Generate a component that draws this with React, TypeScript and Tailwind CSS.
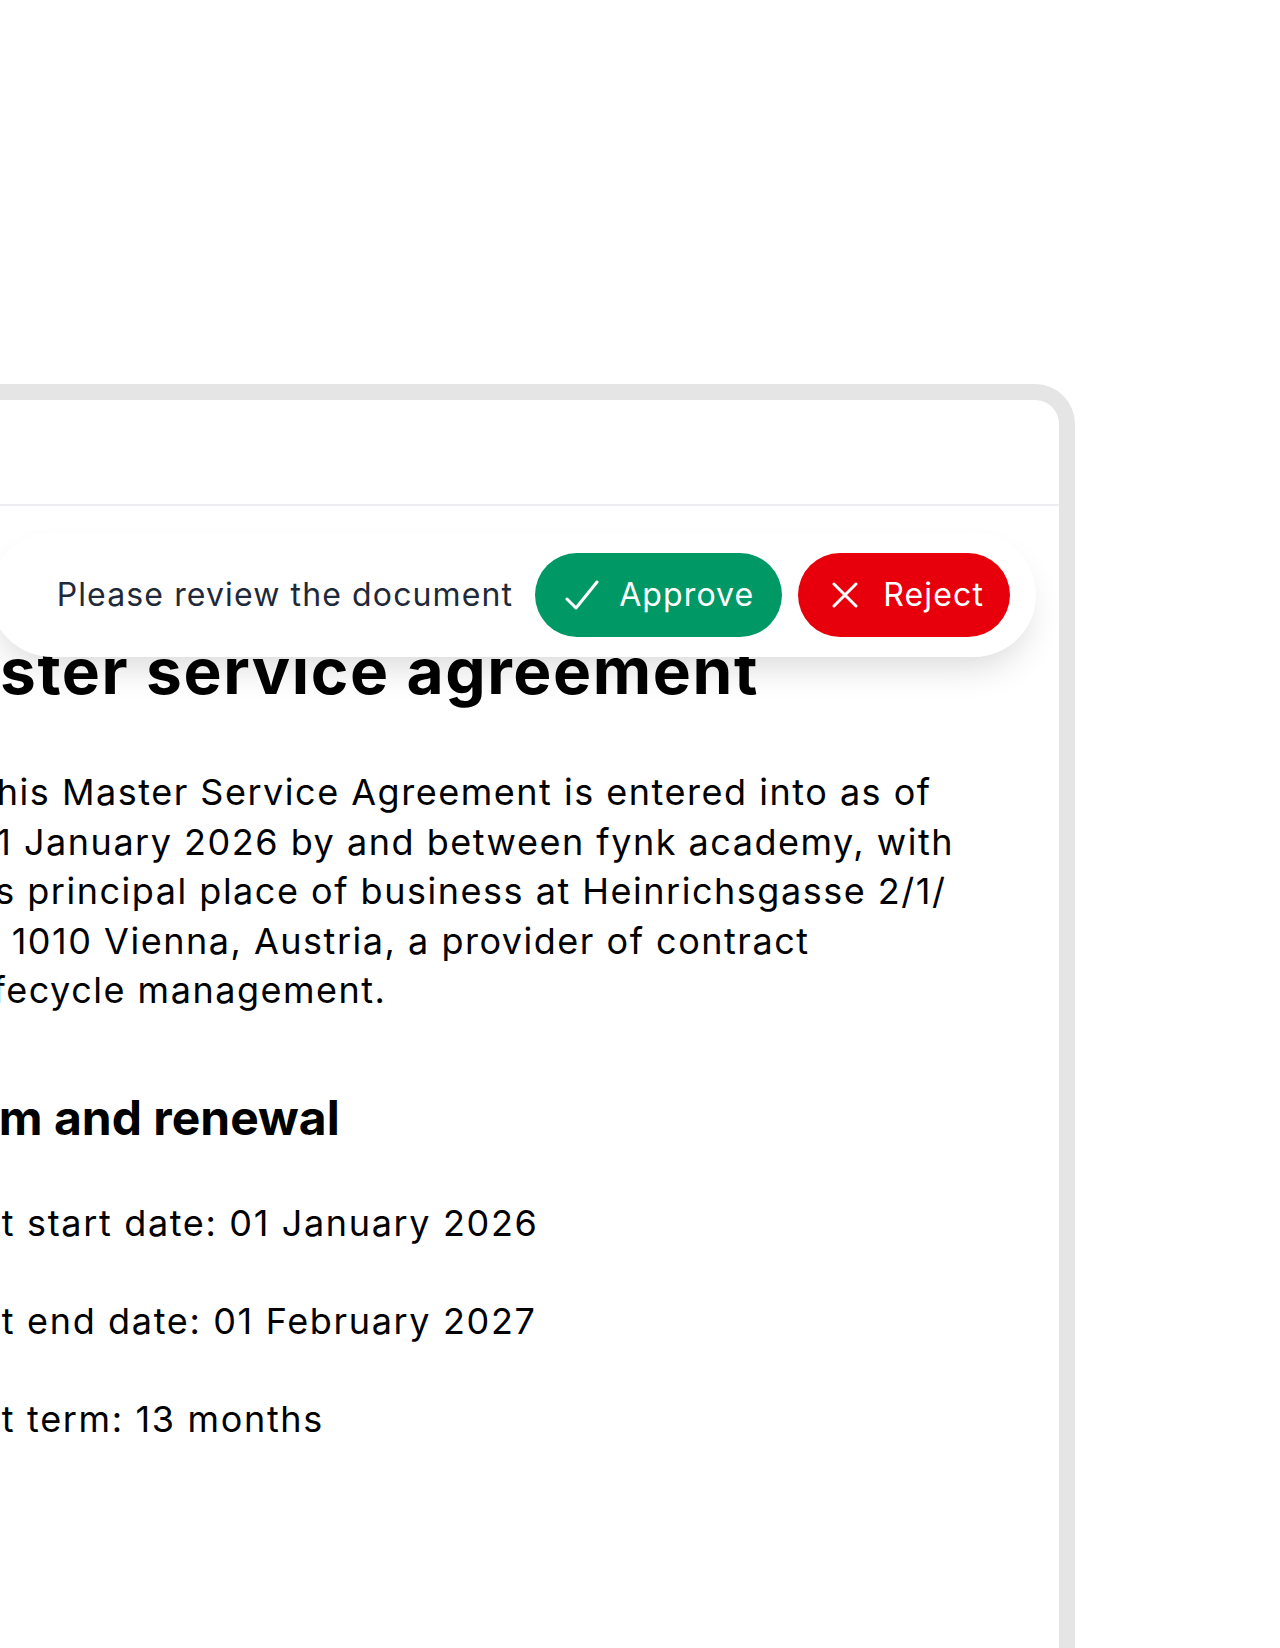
import React from "react";

function CheckIcon() {
  return (
    <svg width="34" height="30" viewBox="0 0 34 30" fill="none" className="shrink-0">
      <polyline
        points="2,19 11,28 32,2"
        stroke="white"
        strokeWidth="3"
        strokeLinecap="round"
        strokeLinejoin="round"
      />
    </svg>
  );
}

function XIcon() {
  return (
    <svg width="26" height="26" viewBox="0 0 26 26" fill="none" className="shrink-0">
      <path d="M2 2 24 24M24 2 2 24" stroke="white" strokeWidth="3" strokeLinecap="round" />
    </svg>
  );
}

export default function App() {
  return (
    <div className="relative h-[1648px] w-[1280px] overflow-hidden bg-white font-[Inter,'Noto_Sans',sans-serif]">
      <div className="ml-[-400px] mt-[384px] h-[1400px] w-[1475px] rounded-t-[40px] bg-[#e5e5e5] px-4 pt-4">
        <div className="relative h-full rounded-t-[24px] bg-white">
          <div className="h-[106px] border-b-2 border-[#eceef1]" />

          <div className="absolute right-[23px] top-[133px] z-10 flex h-[124px] items-center rounded-full bg-white pl-[67px] pr-[26px] shadow-[0_18px_36px_-10px_rgba(0,0,0,0.16)]">
            <span className="whitespace-nowrap text-[32px] leading-none tracking-[0.035em] text-[#1e2939]">
              Please review the document
            </span>
            <button className="ml-[22px] flex h-[84px] items-center gap-[20px] rounded-full bg-[#009966] pl-[30px] pr-[28px] text-[32px] leading-none tracking-[0.035em] text-white">
              <CheckIcon />
              <span>Approve</span>
            </button>
            <button className="ml-[16px] flex h-[84px] items-center gap-[25px] rounded-full bg-[#e7000b] pl-[34px] pr-[26px] text-[32px] leading-none tracking-[0.035em] text-white">
              <XIcon />
              <span>Reject</span>
            </button>
          </div>

          <div className="pl-[384px] pt-[129px] text-black">
            <h1 className="ml-[-100px] whitespace-nowrap text-[64px] font-bold leading-[72px] tracking-[0.025em]">
              Master service agreement
            </h1>
            <p className="ml-[-28px] mt-[61px] whitespace-nowrap text-[36px] leading-[49.5px] tracking-[0.042em]">
              This Master Service Agreement is entered into as of
              <br />
              01 January 2026 by and between fynk academy, with
              <br />
              its principal place of business at Heinrichsgasse 2/1/
              <br />
              1, 1010 Vienna, Austria, a provider of contract
              <br />
              lifecycle management.
            </p>
            <h2 className="ml-[-78px] mt-[73px] whitespace-nowrap text-[48px] font-bold leading-[58px]">
              Term and renewal
            </h2>
            <div className="ml-[-145px] mt-[52.5px] flex flex-col gap-[48.5px] whitespace-nowrap text-[36px] leading-[49.5px] tracking-[0.046em]">
              <p>Contract start date: 01 January 2026</p>
              <p>Contract end date: 01 February 2027</p>
              <p>Contract term: 13 months</p>
            </div>
          </div>
        </div>
      </div>
    </div>
  );
}
